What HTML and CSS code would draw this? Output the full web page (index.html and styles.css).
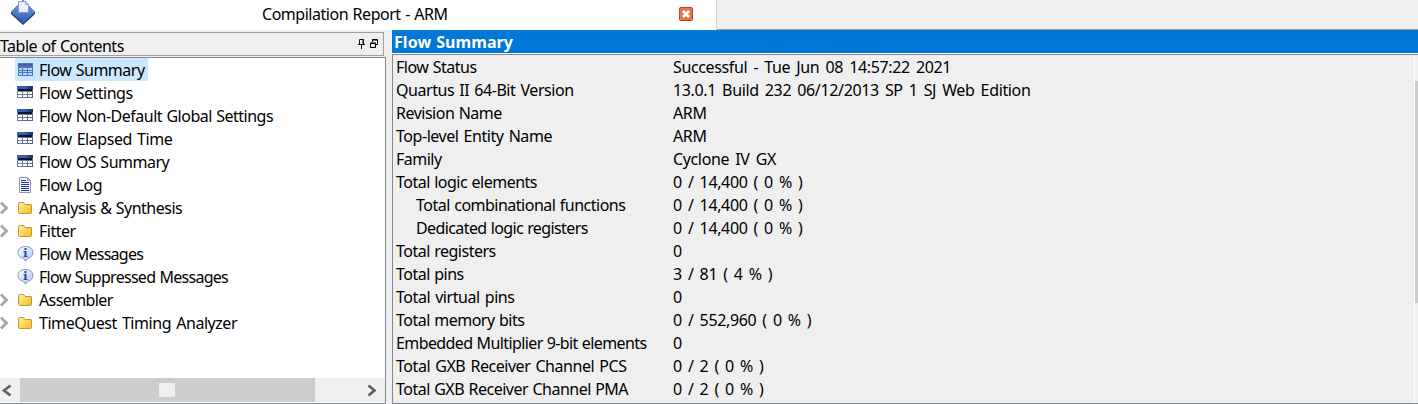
FILE: index.html
```html
<!DOCTYPE html>
<html lang="en">
<head>
<meta charset="utf-8">
<title>Compilation Report - ARM</title>
<link rel="stylesheet" href="styles.css">
</head>
<body>
<svg class="defs" width="0" height="0" aria-hidden="true">
  <defs>
    <linearGradient id="gBlue" x1="0" y1="0" x2="1" y2="0"><stop offset="0" stop-color="#2a62dc"/><stop offset=".5" stop-color="#3d5f9e"/><stop offset="1" stop-color="#1c2a4c"/></linearGradient>
    <linearGradient id="gFrame" x1="0" y1="0" x2="1" y2="1"><stop offset="0" stop-color="#8b9cb8"/><stop offset="1" stop-color="#4b5d80"/></linearGradient>
    <linearGradient id="gFolder" x1="0" y1="0" x2="1" y2="1"><stop offset="0" stop-color="#fff0a0"/><stop offset="1" stop-color="#f5bc1c"/></linearGradient>
    <linearGradient id="gInfo" x1="0" y1="0" x2="1" y2="1"><stop offset="0" stop-color="#ffffff"/><stop offset="1" stop-color="#a9c5f2"/></linearGradient>
    <linearGradient id="gDia" x1="0" y1="0" x2="0" y2="1"><stop offset="0" stop-color="#8aaae6"/><stop offset="1" stop-color="#2456b8"/></linearGradient>
  </defs>
  <symbol id="table" viewBox="0 0 16 12">
    <path fill="url(#gFrame)" d="M0 0h16v12H0z"/><path fill="url(#gBlue)" d="M0 0h16v3H0z"/><path fill="#0a1238" d="M1 3h14v2H1z"/>
    <path fill="#fff" d="M1 6h4v2H1zM6 6h4v2H6zM11 6h4v2h-4zM1 9h4v2H1zM6 9h4v2H6zM11 9h4v2h-4z"/>
  </symbol>
  <symbol id="tablesel" viewBox="0 0 16 14">
    <path fill="#4c79b2" d="M1 0h15v13H1z"/><path fill="#5552b0" d="M2 1h13v2H2z"/><path fill="#4c79b2" d="M5 1h1v2H5zM10 1h1v2h-1z"/>
    <path fill="#b5d7f5" d="M2 5h3v2H2zM6 5h4v2H6zM11 5h4v2h-4zM2 8h3v1H2zM6 8h4v1H6zM11 8h4v1h-4zM2 10h3v2H2zM6 10h4v2H6zM11 10h4v2h-4z"/>
  </symbol>
  <symbol id="log" viewBox="0 0 16 16">
    <path fill="#f2f7ff" stroke="#8797bb" d="M2.500.500h8l3 3v12h-11z"/><path fill="#b8cdf0" stroke="#8797bb" d="M10.500.500v3h3z"/>
    <path fill="#1f35a5" d="M4 3h5v1H4zM4 5h8v1H4zM4 7h8v1H4zM4 9h8v1H4zM4 11h8v1H4zM4 13h8v1H4z"/>
  </symbol>
  <symbol id="folder" viewBox="0 0 16 14">
    <path fill="url(#gFolder)" stroke="#c49a30" d="M1.500 2.500q0-1 1-1h4l1.500 2h6q.500 0 .500.500v7.500q0 1-1 1h-11q-1 0-1-1z"/>
  </symbol>
  <symbol id="info" viewBox="0 0 17 16">
    <path fill="url(#gInfo)" stroke="#8496b8" d="M8.500.500c4.500 0 7.500 2.500 7.500 6 0 3.200-2.300 5.300-5.500 5.900l-2 2.800-2-2.800C3.300 11.800 1 9.700 1 6.500c0-3.500 3-6 7.500-6z"/>
    <path fill="#2342ad" d="M7.500 2h2v2h-2zM6.500 5h3v5h1v1h-4v-1h1V6h-1z"/>
  </symbol>
  <symbol id="chev" viewBox="0 0 9 14"><path fill="none" stroke="#a6a6a6" stroke-width="2.800" d="M1 1.500 6.500 7 1 12.500"/></symbol>
</svg>

<div class="tabs">
  <div class="tab">
    <svg class="logo" width="26" height="26" viewBox="0 0 26 26"><path fill="url(#gDia)" stroke="#4168b5" stroke-width=".7" d="M13 0 25 12 13 23 1 12z"/><path fill="#203c7c" d="m1 12 12 11 12-11v2L13 25 1 14z"/><path fill="#e8eefb" stroke="#8297c7" d="M8.500 1.500h7l3 3v8h-10z"/><path fill="#c3d3f2" stroke="#8297c7" stroke-width=".6" d="M15.500 1.500v3h3z"/></svg>
    <span class="tab-title">Compilation Report - ARM</span>
    <svg class="close" width="14" height="14" viewBox="0 0 14 14"><rect x=".5" y=".5" width="13" height="13" rx="1.200" fill="#e07850" stroke="#d4382a"/><path stroke="#fff" stroke-width="2.600" d="m4 4 6 6M10 4l-6 6"/></svg>
  </div>
</div>
<div class="main">
  <div class="left">
    <div class="toc-head"><span>Table of Contents</span>
      <svg class="tools" width="21" height="11" viewBox="0 0 21 11"><path fill="none" stroke="#111" d="M2.500 6V1.500h4V6M1 6.500h7M4.500 7v4"/><path stroke="#111" d="M6 1v5"/><path fill="none" stroke="#000" d="M15.500 4V1.500h5v5H18M15 2h6"/><path fill="#efefef" stroke="#000" d="M13.500 5.500h5v4h-5zM13 5h6"/></svg>
    </div>
    <div class="tree">
      <div class="node sel"><i></i><b><svg width="16" height="14"><use href="#tablesel"/></svg></b><span>Flow Summary</span></div>
      <div class="node"><i></i><b><svg class="up" width="16" height="12"><use href="#table"/></svg></b><span>Flow Settings</span></div>
      <div class="node"><i></i><b><svg class="up" width="16" height="12"><use href="#table"/></svg></b><span>Flow Non-Default Global Settings</span></div>
      <div class="node"><i></i><b><svg class="up" width="16" height="12"><use href="#table"/></svg></b><span class="open">Flow Elapsed Time</span></div>
      <div class="node"><i></i><b><svg class="up" width="16" height="12"><use href="#table"/></svg></b><span>Flow OS Summary</span></div>
      <div class="node"><i></i><b><svg width="16" height="16"><use href="#log"/></svg></b><span>Flow Log</span></div>
      <div class="node"><i><svg width="9" height="14"><use href="#chev"/></svg></i><b><svg width="16" height="14"><use href="#folder"/></svg></b><span>Analysis &amp; Synthesis</span></div>
      <div class="node"><i><svg width="9" height="14"><use href="#chev"/></svg></i><b><svg width="16" height="14"><use href="#folder"/></svg></b><span>Fitter</span></div>
      <div class="node"><i></i><b><svg width="17" height="16"><use href="#info"/></svg></b><span class="tighter">Flow Messages</span></div>
      <div class="node"><i></i><b><svg width="17" height="16"><use href="#info"/></svg></b><span class="tighter">Flow Suppressed Messages</span></div>
      <div class="node"><i><svg width="9" height="14"><use href="#chev"/></svg></i><b><svg width="16" height="14"><use href="#folder"/></svg></b><span class="tight">Assembler</span></div>
      <div class="node"><i><svg width="9" height="14"><use href="#chev"/></svg></i><b><svg width="16" height="14"><use href="#folder"/></svg></b><span class="open">TimeQuest Timing Analyzer</span></div>
      <div class="hbar">
        <svg class="arrow" width="20" height="24" viewBox="0 0 20 24"><path fill="none" stroke="#606060" stroke-width="2.600" d="m10.500 7.500-6.500 5 6.500 5"/></svg>
        <div class="thumb"><div class="grip"></div></div>
        <svg class="arrow end" width="20" height="24" viewBox="0 0 20 24"><path fill="none" stroke="#606060" stroke-width="2.600" d="m3.500 7.500 6 5-6 5"/></svg>
      </div>
    </div>
  </div>
  <div class="right">
    <div class="title">Flow Summary</div>
    <div class="body">
      <div class="rows">
        <div class="row"><span>Flow Status</span><span>Successful - Tue Jun 08 14:57:22 2021</span></div>
        <div class="row"><span class="open">Quartus II 64-Bit Version</span><span>13.0.1 Build 232 06/12/2013 SP 1 SJ Web Edition</span></div>
        <div class="row"><span>Revision Name</span><span>ARM</span></div>
        <div class="row"><span class="open">Top-level Entity Name</span><span>ARM</span></div>
        <div class="row"><span>Family</span><span>Cyclone IV GX</span></div>
        <div class="row"><span>Total logic elements</span><span>0 / 14,400 ( 0 % )</span></div>
        <div class="row"><span class="sub">Total combinational functions</span><span>0 / 14,400 ( 0 % )</span></div>
        <div class="row"><span class="sub tight">Dedicated logic registers</span><span>0 / 14,400 ( 0 % )</span></div>
        <div class="row"><span>Total registers</span><span>0</span></div>
        <div class="row"><span>Total pins</span><span>3 / 81 ( 4 % )</span></div>
        <div class="row"><span class="open">Total virtual pins</span><span>0</span></div>
        <div class="row"><span>Total memory bits</span><span>0 / 552,960 ( 0 % )</span></div>
        <div class="row"><span class="tight">Embedded Multiplier 9-bit elements</span><span>0</span></div>
        <div class="row"><span class="open">Total GXB Receiver Channel PCS</span><span>0 / 2 ( 0 % )</span></div>
        <div class="row"><span>Total GXB Receiver Channel PMA</span><span>0 / 2 ( 0 % )</span></div>
      </div>
      <div class="vbar"><div class="vthumb"></div></div>
    </div>
  </div>
</div>
</body>
</html>
```
FILE: styles.css
```css
* { box-sizing: border-box; }
body { margin: 0; width: 1418px; height: 404px; overflow: hidden; background: #efefef; color: #000;
  font: 16px/23px "Noto Sans", sans-serif; letter-spacing: -0.5px; word-spacing: 0.7px; white-space: nowrap; }
svg { display: block; flex: none; }
.defs { position: absolute; }
.tabs { height: 30px; border-bottom: 1px solid #a0a0a0; }
.tab { display: flex; align-items: flex-start; width: 717px; height: 30px; background: #fff; border-right: 1px solid #d4d4d4; }
.logo { margin-left: 10px; }
.tab-title { margin: 3px 0 0 226px; width: 417px; letter-spacing: -0.47px; word-spacing: 0.8px; }
.close { margin-top: 7px; }
.main { display: flex; height: 374px; }
.left { width: 386px; margin-right: 6px; padding-top: 2px; }
.toc-head { display: flex; justify-content: space-between; width: 384px; height: 24px; border: 1px solid #a0a0a0; border-left: 0; line-height: 26px; }
.tools { margin: 5px 5px 0 0; }
.tree { display: flex; flex-direction: column; margin-top: 1px; height: 347px; background: #fff; border: 1px solid #828790; border-left: 0; }
.node { display: flex; height: 23px; }
.node i { width: 15px; display: flex; align-items: center; }
.node b { width: 22px; padding-left: 2px; display: flex; align-items: center; }
.node span { padding: 0 3px 0 2px; line-height: 24px; }
.up { margin-bottom: 1px; }
.sel b, .sel span { background: #cce8ff; }
.open { letter-spacing: -0.45px; word-spacing: 1.4px; }
.tight { letter-spacing: -0.6px; word-spacing: 0.5px; }
.tighter { letter-spacing: -0.72px; word-spacing: 0.7px; }
.hbar { display: flex; height: 24px; margin-top: auto; margin-bottom: 1px; background: #efefef; }
.thumb { width: 295px; background: #cdcdcd; display: flex; }
.grip { width: 16px; height: 14px; margin: 5px 0 0 139px; background: #efefef; }
.end { margin-left: auto; }
.right { flex: 1; }
.title { height: 24px; padding-left: 2px; background: #0078d7; border-bottom: 1px solid #fff; color: #fff; font-weight: 700; line-height: 24px; letter-spacing: 0.08px; }
.body { display: flex; height: 350px; border: 1px solid #828790; border-right: 0; }
.rows { flex: 1; padding-top: 1px; }
.row { display: flex; height: 23px; padding-left: 3px; }
.row span:first-child { width: 277px; }
.row span:last-child { letter-spacing: -0.36px; word-spacing: 2.3px; }
.row .sub { padding-left: 20px; }
.vbar { width: 4px; border-left: 1px solid #fff; padding-top: 26px; }
.vthumb { height: 222px; background: #cdcdcd; }
```
